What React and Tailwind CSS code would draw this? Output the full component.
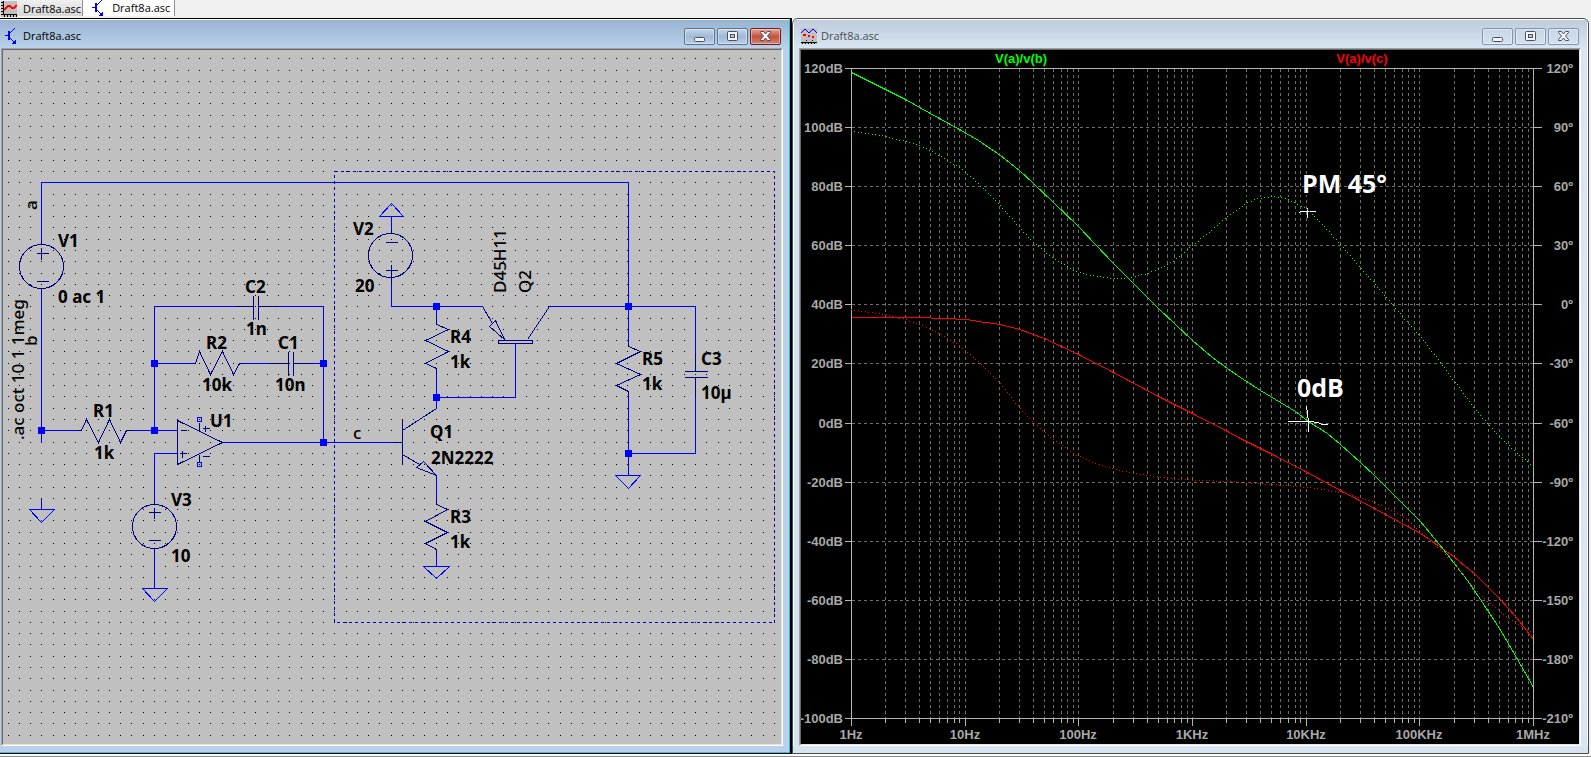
const WIRE = '#0000ff'
const PART = '#000080'

// dots of the schematic sheet
const gridDots = []
for (let row = 0; row < 61; row++) {
  for (let col = 0; col < 69; col++) {
    gridDots.push(`M${Math.floor(8 + col * 11.27)} ${Math.floor(58.9 + row * 11.27)}h1v1h-1z`)
  }
}

const wires = [
  'M41 244V182H628V342',
  'M41 288V442',
  'M41 430H81',
  'M126 430H177',
  'M154 430V306H253',
  'M258 306H323V442',
  'M154 363H195',
  'M239 363H288',
  'M293 363H323',
  'M222 442H402',
  'M177 453H154V504',
  'M154 548V588',
  'M41 498V509',
  'M391 216V233',
  'M391 277V306H482',
  'M436 306V324',
  'M436 368V408',
  'M436 397H515V343',
  'M549 306H695V371',
  'M628 391V475',
  'M695 377V453H628',
  'M436 475V504',
  'M436 549V566',
]

// grounds
const grounds = [
  'M29 509H54L41 522Z',
  'M142 588H167L154 601Z',
  'M379 216H403L391 203Z',
  'M423 566H449L436 578Z',
  'M615 475H640L628 488Z',
]

const parts = [
  // leads
  'M41 240V244M41 288V294',
  'M154 499V504M154 548V553',
  'M391 228V233M391 277V283',
  'M77 430H81L86 419L98 442L109 419L120 442L126 430H132',
  'M193 363H195L199 351L210 374L222 351L233 374L239 363H243',
  'M234 306H253M253 295V319M258 295V319M258 306H278',
  'M268 363H288M288 351V375M293 351V375M293 363H312',
  'M436 318V324L448 329L425 340L448 351L425 363L436 368V374',
  'M436 498V504L447 509L425 521L447 532L425 543L436 549V555',
  'M628 342V346L640 351L616 363L640 374L616 385L628 391V397',
  'M695 352V371M684 371H707M684 377H707M695 377V397',
  // sources
  'M36 253H48M41 247V259M36 281H48',
  'M148 512H160M154 507V518M148 540H160',
  'M385 242H397M385 270H397M391 264V276',
  // op amp
  'M177 420V464L222 442Z',
  'M180 430H186M179 453H186M182 450V457',
  'M199 422V430M199 454V462M202 428H209M205 425V431M202 456H209',
  // transistors
  'M392 442H402M402 419V464M402 430L436 408M402 454L419 464',
  'M436 475L423 461L416 467Z',
  'M482 306L492 323M504 339L495 320L489 326Z',
  'M498 340H532V343H498ZM527 339L549 306',
]

const junctions = [
  [41, 430], [154, 430], [154, 363], [323, 363], [323, 442],
  [436, 306], [436, 397], [628, 306], [628, 453],
]

const labels = [
  ['V1', 58, 247], ['0 ac 1', 58, 303],
  ['C2', 245, 293], ['1n', 246, 335],
  ['R2', 206, 349], ['10k', 202, 391],
  ['C1', 278, 349], ['10n', 275, 391],
  ['R1', 93, 417], ['1k', 94, 459],
  ['U1', 210, 427],
  ['V3', 171, 506], ['10', 171, 562],
  ['V2', 353, 235], ['20', 355, 292],
  ['R4', 450, 343], ['1k', 450, 368],
  ['Q1', 430, 438], ['2N2222', 431, 464],
  ['R5', 642, 365], ['1k', 642, 390],
  ['C3', 701, 365], ['10µ', 701, 399],
  ['R3', 450, 523], ['1k', 450, 548],
]

const verticalLabels = [
  ['a', 37, 210], ['b', 37, 346], ['.ac oct 10 1 1meg', 24, 440],
  ['D45H11', 506, 293], ['Q2', 531, 293],
]

// bode plot
const LEFT = 851
const RIGHT = 1533
const TOP = 68
const BOTTOM = 718
const rows = Array.from({ length: 12 }, (_, i) => ({
  y: Math.round(TOP + ((BOTTOM - TOP) * i) / 11),
  db: `${120 - i * 20}dB`,
  deg: `${120 - i * 30}º`,
}))
const freqs = ['1Hz', '10Hz', '100Hz', '1KHz', '10KHz', '100KHz', '1MHz']
const freqX = (decade, n) => Math.round(LEFT + ((RIGHT - LEFT) / 6) * (decade + Math.log10(n)))
const columns = []
for (let d = 0; d < 6; d++) {
  for (let n = 1; n < 10; n++) {
    columns.push({ x: freqX(d, n), major: n === 1 })
  }
}

const traces = [
  {
    color: '#ff0000',
    dotted: true,
    line: `851,309 885,314 905,319 919,324 939,333 959,345 978,361 1000,383 1019,407 1033,422 1053,439 1073,453
      1097,464 1118,470 1147,475 1178,479 1227,481 1255,483 1273,484 1307,487 1328,490 1350,494 1374,502 1392,510
      1407,520 1420,531 1441,550 1457,567 1473,587 1487,601 1500,611 1510,619 1523,627 1533,633`,
  },
  {
    color: '#ff0000',
    line: `851,317 930,317 931,318 955,318 956,319 966,319 978,321 1000,324 1019,329 1044,338 1078,354 1113,372 1158,396 1192,413
      1227,431 1240,438 1272,454 1307,472 1340,490 1374,508 1420,533 1432,541 1453,556 1475,574 1499,598 1516,617 1533,639`,
  },
  {
    color: '#00ff00',
    dotted: true,
    line: `851,131 868,133 885,136 905,141 919,145 939,155 959,167 970,176 988,193 1000,205 1019,227 1033,242 1053,258
      1073,270 1090,275 1113,278 1128,278 1147,273 1160,268 1173,261 1192,245 1212,229 1227,216 1247,202 1258,198
      1272,196 1280,197 1290,200 1307,209 1323,225 1340,244 1360,267 1374,283 1386,297 1402,316 1420,336 1441,363
      1457,385 1475,409 1488,424 1499,436 1516,452 1533,466`,
  },
  {
    color: '#00ff00',
    line: `851,72 885,89 905,99 919,107 959,129 978,140 1000,155 1019,170 1033,183 1053,202 1078,226 1113,263 1133,283
      1158,308 1192,340 1212,357 1227,368 1240,377 1260,390 1280,402 1295,411 1308,421 1327,433 1340,444 1360,462
      1374,475 1394,495 1420,521 1443,549 1457,567 1467,580 1480,599 1499,628 1516,657 1533,687`,
  },
]

// one pixel every few pixels along the line
function dotPath(line) {
  const pts = line.trim().split(/\s+/).map((p) => p.split(',').map(Number))
  const step = 3.5
  let next = 0
  let d = ''
  for (let i = 1; i < pts.length; i++) {
    const [x1, y1] = pts[i - 1]
    const [x2, y2] = pts[i]
    const length = Math.hypot(x2 - x1, y2 - y1)
    while (next < length) {
      const t = next / length
      d += `M${Math.round(x1 + (x2 - x1) * t)} ${Math.round(y1 + (y2 - y1) * t)}h1v1h-1z`
      next += step
    }
    next -= length
  }
  return d
}

function TransistorIcon() {
  return (
    <svg className="h-4 w-4 shrink-0" viewBox="0 0 16 16" fill="none" stroke="#0000ff" shapeRendering="crispEdges" aria-hidden="true">
      <path d="M0 7.5H4" />
      <path d="M4 3V12" strokeWidth="2" />
      <path d="M5 5L10 0M5 10L10 15" />
      <path d="M11 15.500H7L9 13.500L10.500 11.500Z" fill="#0000ff" stroke="none" />
    </svg>
  )
}

function TabPlotIcon() {
  return (
    <svg className="h-4 w-4 shrink-0" viewBox="0 0 16 16" fill="none" shapeRendering="crispEdges" aria-hidden="true">
      <path fill="#c0c0c0" d="M0 0H16V16H0z" />
      <path stroke="#000" d="M2.500 0V14M0 1.500H2M0 4.500H2M0 7.500H2M0 10.500H2M0 13.500H16M3.500 14V16M6.500 14V16M9.500 14V16M12.500 14V16M15.500 14V16" />
      <path stroke="#ff0000" strokeWidth="2" d="M3 9L7 5H9L11 7H13L16 4" shapeRendering="auto" />
    </svg>
  )
}

function WindowPlotIcon() {
  return (
    <svg className="h-4 w-4 shrink-0" viewBox="0 0 16 16" fill="none" shapeRendering="crispEdges" aria-hidden="true">
      <path fill="#c0c0c0" d="M0 0H16V16H0z" />
      <path stroke="#0000ff" d="M0 5L4 1L8 5L12 1L16 5" />
      <path stroke="#ff0000" strokeWidth="2" d="M2 7H5M7 8H9M11 9H13" />
      <path stroke="#0000ff" d="M5 12.500H6M11 12.500H12" />
      <path stroke="#000" d="M0 14.500H16M1.500 15V16M4.500 15V16M7.500 15V16M10.500 15V16M13.500 15V16" />
    </svg>
  )
}

function CaptionButton({ kind, active }) {
  const look = !active
    ? 'border-[#8394b3] bg-linear-to-b from-[#c9d7e6] to-[#d3e0ee]'
    : kind === 'Close'
      ? 'border-[#6b1e24] bg-linear-to-b from-[#e3a69b] via-[#c4513c] to-[#d5836c]'
      : 'border-[#5f7391] bg-linear-to-b from-[#c3d6ea] via-[#9fb9d6] to-[#b8d0e9]'
  return (
    <button
      type="button"
      aria-label={kind}
      className={`flex h-[17px] w-[31px] items-center justify-center rounded-[2px] border shadow-[inset_0_0_0_1px_rgba(255,255,255,0.4)] ${look}`}
    >
      <svg className="h-3 w-3" viewBox="0 0 12 12" fill="none" stroke="#4a5064" aria-hidden="true">
        {kind === 'Minimize' && <rect x="0.500" y="7.500" width="10" height="4" rx="1" fill="#f4f4f4" />}
        {kind === 'Maximize' && (
          <>
            <rect x="0.500" y="1.500" width="10" height="9" rx="1" fill="#f4f4f4" />
            <rect x="3.500" y="4.500" width="4" height="3" fill="#b4cbe4" />
          </>
        )}
        {kind === 'Close' && (
          <path
            d="M0.500 1.500H3.500L5.500 4L7.500 1.500H10.500V2.500L7.500 6L10.500 9.500V10.500H7.500L5.500 8L3.500 10.500H0.500V9.500L3.500 6L0.500 2.500Z"
            fill="#f4f4f4"
          />
        )}
      </svg>
    </button>
  )
}

function Window({ title, icon, active, children }) {
  const frame = active
    ? 'border-r-2 border-t border-b border-black bg-[#b9d1ea]'
    : 'rounded-t-md border border-[#4b4b4b] bg-[#d7e4f2]'
  const inner = active
    ? 'border-t border-t-white border-r border-b border-r-[#1fc8e0] border-b-[#1fc8e0]'
    : 'rounded-t-md border-x border-t border-white'
  const header = active
    ? 'gap-0.5 pl-[5px] from-[#99b4d1] to-[#b9d1ea]'
    : 'gap-1 pl-[7px] from-[#bfcddb] to-[#d7e4f2]'
  const body = active ? 'ml-px mr-1.5 mb-1.5' : 'ml-[5px] mr-1.5 mb-[7px]'
  return (
    <section className={frame}>
      <div className={inner}>
        <header className={`flex h-7 items-center bg-linear-to-b pr-2 pt-1 ${header}`}>
          {icon}
          <h2 className={`grow text-[11px] leading-4 ${active ? 'text-black' : 'text-[#4c4c4c]'}`}>{title}</h2>
          <div className="flex gap-0.5">
            <CaptionButton kind="Minimize" active={active} />
            <CaptionButton kind="Maximize" active={active} />
            <CaptionButton kind="Close" active={active} />
          </div>
        </header>
        <div className={`border border-b-white border-l-[#a0a0a0] border-r-white border-t-[#a0a0a0] ${body}`}>
          <div className="border border-b-[#e3e3e3] border-l-[#696969] border-r-[#e3e3e3] border-t-[#696969]">
            {children}
          </div>
        </div>
      </div>
    </section>
  )
}

function Schematic() {
  return (
    <svg className="block h-auto w-full bg-[#c0c0c0]" viewBox="3 50 778 694" role="img" aria-label="Schematic">
      <path d={gridDots.join('')} fill="#000" shapeRendering="crispEdges" />
      <g transform="translate(0.5 0.5)" fill="none" shapeRendering="crispEdges">
        <rect x="334" y="171" width="440" height="451" stroke="#0000c0" strokeDasharray="3 3" />
        <path d={wires.join('')} stroke={WIRE} />
        <path d={grounds.join('')} stroke={WIRE} />
        <path d={parts.join('')} stroke={PART} />
        <circle cx="41" cy="266" r="22" stroke={PART} />
        <circle cx="154" cy="526" r="22" stroke={PART} />
        <circle cx="390" cy="255" r="22" stroke={PART} />
        <path d="M197 417h4v4h-4zM197 462h4v4h-4z" stroke={WIRE} />
      </g>
      {junctions.map(([x, y]) => (
        <rect key={`${x}-${y}`} x={x - 3} y={y - 3} width="7" height="7" fill={WIRE} shapeRendering="crispEdges" />
      ))}
      <g className="font-['Noto_Sans',sans-serif] text-[17px] font-bold">
        {labels.map(([text, x, y]) => (
          <text key={`${x}-${y}`} x={x} y={y}>{text}</text>
        ))}
      </g>
      <g className="font-['Noto_Sans',sans-serif] text-[17px] font-medium">
        <text x="353" y="439">c</text>
        {verticalLabels.map(([text, x, y]) => (
          <text key={text} transform={`translate(${x} ${y}) rotate(-90)`}>{text}</text>
        ))}
      </g>
    </svg>
  )
}

function BodePlot() {
  return (
    <svg className="block h-auto w-full bg-black" viewBox="801 50 778 694" role="img" aria-label="Bode plot">
      <g transform="translate(0.5 0.5)" fill="none" shapeRendering="crispEdges">
        <g stroke="#6e6e6e" strokeDasharray="3 3">
          {columns.map(({ x }) => <path key={x} d={`M${x} ${TOP}V${BOTTOM}`} />)}
          {rows.map(({ y }) => <path key={y} d={`M${LEFT} ${y}H${RIGHT}`} />)}
        </g>
        <g stroke="#b4b4b4">
          <path d={`M${LEFT} ${TOP}H${RIGHT}V${BOTTOM}H${LEFT}Z`} />
          {rows.map(({ y }) => <path key={y} d={`M844 ${y}H${LEFT}M${RIGHT} ${y}H1541`} />)}
          {columns.map(({ x, major }) => <path key={x} d={`M${x} ${BOTTOM}v${major ? 7 : 4}`} />)}
          <path d={`M${RIGHT} ${BOTTOM}v7`} />
        </g>
        {traces.filter((t) => !t.dotted).map(({ color, line }) => (
          <polyline key={line} points={line} stroke={color} />
        ))}
        <path stroke="#fff" d="M1298 213L1300 211H1315M1307 207V217" />
        <path stroke="#fff" d="M1287 421H1308L1318 422L1321 424H1327M1305 406H1306L1308 421V431" />
      </g>
      {traces.filter((t) => t.dotted).map(({ color, line }) => (
        <path key={line} d={dotPath(line)} fill={color} shapeRendering="crispEdges" />
      ))}
      <g className="font-['Liberation_Sans',Arial,sans-serif] text-[13px] font-bold" fill="#a8a8a8">
        {rows.map(({ y, db, deg }) => (
          <g key={y} textAnchor="end">
            <text x="843" y={y + 5}>{db}</text>
            <text x="1573" y={y + 5}>{deg}</text>
          </g>
        ))}
        {freqs.map((f, i) => (
          <text key={f} x={freqX(i, 1)} y="739" textAnchor="middle">{f}</text>
        ))}
        <text x="1021" y="63" textAnchor="middle" fill="#00ff00">V(a)/v(b)</text>
        <text x="1362" y="63" textAnchor="middle" fill="#ff0000">V(a)/v(c)</text>
      </g>
      <g className="font-['Open_Sans',sans-serif] text-[25px] font-bold" fill="#fff">
        <text x="1302" y="193">PM 45°</text>
        <text x="1297" y="397">0dB</text>
      </g>
    </svg>
  )
}

export default function App() {
  return (
    <main className="border-b border-[#8c8c8c] bg-[#f0f0f0] font-['Open_Sans',sans-serif] text-[11px] text-black">
      <nav className="flex h-[18px] items-start" role="tablist">
        <button
          type="button"
          role="tab"
          aria-selected="false"
          className="flex h-4 items-center gap-1.5 border-r border-[#8e8f97] bg-linear-to-b from-[#f0f0f0] to-[#d6d6d6] pl-px pr-px pt-0.5 leading-4"
        >
          <TabPlotIcon />
          Draft8a.asc
        </button>
        <button
          type="button"
          role="tab"
          aria-selected="true"
          className="flex h-4 items-center gap-1 border-r border-[#8e8f97] bg-white pl-[9px] pr-1 leading-4"
        >
          <TransistorIcon />
          Draft8a.asc
        </button>
      </nav>
      <div className="grid grid-cols-[792fr_797fr] border-b-2 border-b-white pr-0.5">
        <Window title="Draft8a.asc" icon={<TransistorIcon />} active>
          <Schematic />
        </Window>
        <Window title="Draft8a.asc" icon={<WindowPlotIcon />}>
          <BodePlot />
        </Window>
      </div>
    </main>
  )
}
